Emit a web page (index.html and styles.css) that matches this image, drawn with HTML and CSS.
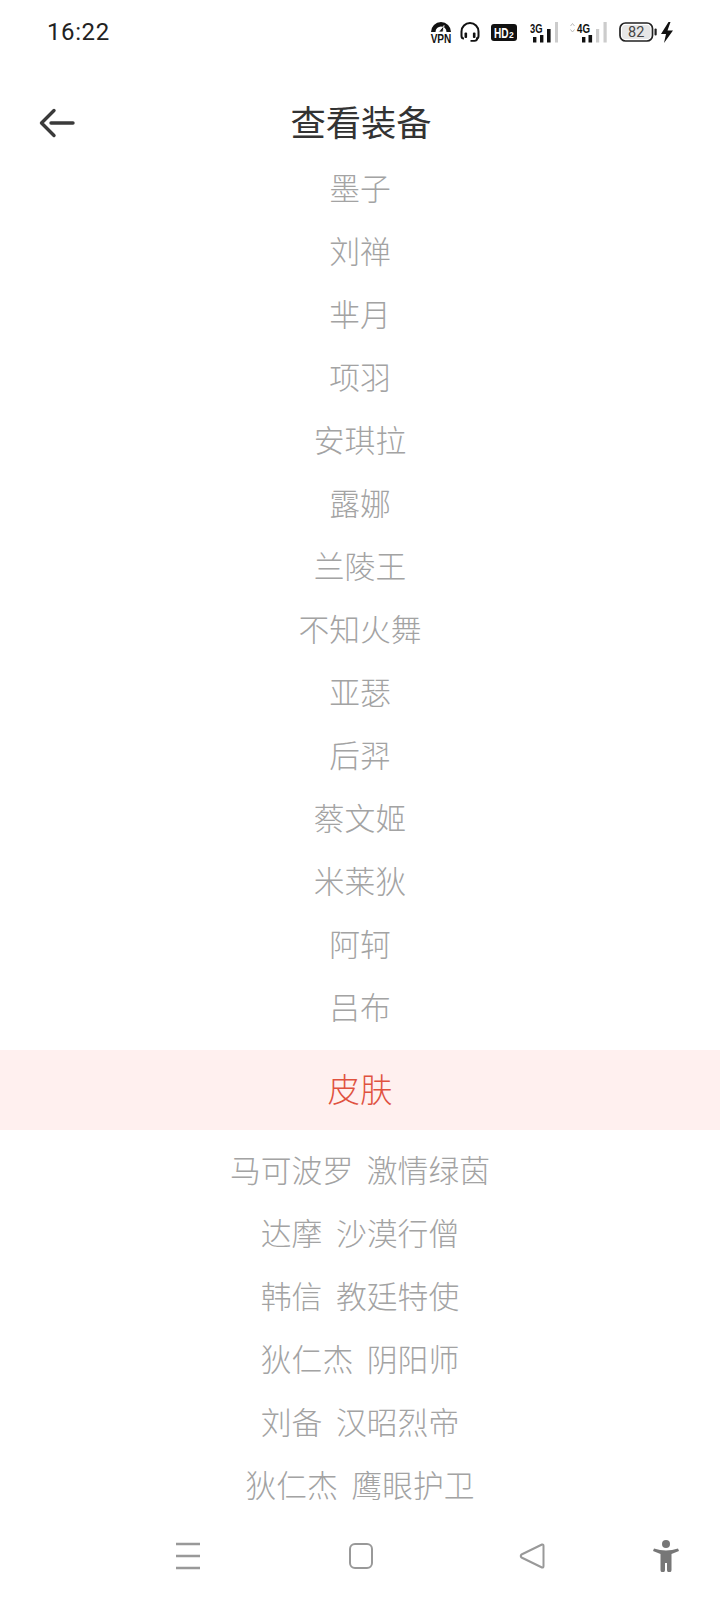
FILE: index.html
```html
<!DOCTYPE html>
<html lang="zh-CN">
<head>
  <meta charset="UTF-8">
  <title>查看装备</title>
  <meta name="viewport" content="width=device-width, initial-scale=1.0">
  <link rel="stylesheet" href="styles.css">
</head>
<body>
  <div class="page">
    <div class="status-bar">
      <span class="clock">16:22</span>
      <div class="status-icons">
        <svg class="ic-vpn" width="22" height="27" viewBox="0 -2 22 27">
          <path d="M1 11 A10 10 0 0 1 21 11 L16.5 11 A5.5 5.5 0 0 0 5.5 11 Z" fill="#111"/>
          <path d="M8.5 11 L14 4.5 L13 11 Z" fill="#111" stroke="#fff" stroke-width="0.8"/>
          <text class="ic-text" transform="translate(11 22) scale(.84 1)" text-anchor="middle" font-size="12">VPN</text>
        </svg>
        <svg class="ic-headset" width="20" height="20" viewBox="0 0 20 20">
          <path d="M4 16.5 Q1.5 16.5 1.5 14 V9.5 A8.5 8.5 0 0 1 18.5 9.5 V14 Q18.5 16.5 16 16.5" fill="none" stroke="#111" stroke-width="2"/>
          <rect x="4.5" y="10.5" width="2.6" height="5.5" rx="1" fill="#111"/>
          <rect x="12.9" y="10.5" width="2.6" height="5.5" rx="1" fill="#111"/>
          <path d="M17.5 16 Q17 18.8 14.5 18.8 H10.5" fill="none" stroke="#111" stroke-width="1.8"/>
        </svg>
        <svg class="ic-hd" width="26" height="17" viewBox="0 0 26 17">
          <rect width="26" height="17" rx="3" fill="#111"/>
          <text class="ic-text-w" transform="translate(3 13.5) scale(.72 1)" font-size="14" font-weight="700">HD</text>
          <text class="ic-text-w" x="18" y="13.5" font-size="8.5" font-weight="700">2</text>
        </svg>
        <svg class="ic-sig" width="28" height="21" viewBox="0 0 28 21">
          <text class="ic-text" x="0" y="11" font-size="13.5" textLength="12.5" lengthAdjust="spacingAndGlyphs">3G</text>
          <rect x="3" y="15" width="3.4" height="5.5" fill="#111"/>
          <rect x="10" y="13" width="3.4" height="7.5" fill="#111"/>
          <rect x="17" y="7" width="3.6" height="13.5" fill="#111"/>
          <rect x="25" y="0" width="3" height="20.5" fill="#ccc"/>
        </svg>
        <svg class="ic-sig4" width="38" height="21" viewBox="0 0 38 21">
          <path d="M1.5 4 L3.5 1.5 L5.5 4 M1.5 7.5 L3.5 10 L5.5 7.5" fill="none" stroke="#bbb" stroke-width="1"/>
          <text class="ic-text" x="8" y="11" font-size="13.5" textLength="13" lengthAdjust="spacingAndGlyphs">4G</text>
          <rect x="13" y="15" width="3.4" height="5.5" fill="#111"/>
          <rect x="19.5" y="13" width="3.6" height="7.5" fill="#111"/>
          <rect x="27" y="7" width="3.2" height="13.5" fill="#ccc"/>
          <rect x="34.5" y="0" width="3.2" height="20.5" fill="#ccc"/>
        </svg>
        <svg class="ic-bat" width="38" height="20" viewBox="0 0 38 20">
          <rect x="1" y="1" width="32.5" height="18" rx="5.5" fill="#fff" stroke="#222" stroke-width="1.7"/>
          <rect x="3" y="3" width="28.5" height="14" rx="3.5" fill="#e6e6e6"/>
          <text class="ic-text-g" x="17.2" y="15.2" text-anchor="middle" font-size="14.5">82</text>
          <rect x="35.5" y="6.5" width="2.2" height="7" rx="1" fill="#222"/>
        </svg>
        <svg class="ic-bolt" width="12" height="21" viewBox="0 0 12 21">
          <path d="M7.5 0 L0 12 H5 L3 21 L12 8.5 H6.5 L9.5 0 Z" fill="#111"/>
        </svg>
      </div>
    </div>

    <div class="top-bar">
      <svg class="back" width="36" height="30" viewBox="0 0 36 30">
        <path d="M15 2.5 L2.5 15 L15 27.5" fill="none" stroke="#3a3a3a" stroke-width="3.4" stroke-linecap="round" stroke-linejoin="round"/>
        <path d="M12 15 H34" fill="none" stroke="#3a3a3a" stroke-width="3.4" stroke-linecap="round"/>
      </svg>
      <h1 class="title">查看装备</h1>
    </div>

    <ul class="list">
      <li>墨子</li>
      <li>刘禅</li>
      <li>芈月</li>
      <li>项羽</li>
      <li>安琪拉</li>
      <li>露娜</li>
      <li>兰陵王</li>
      <li>不知火舞</li>
      <li>亚瑟</li>
      <li>后羿</li>
      <li>蔡文姬</li>
      <li>米莱狄</li>
      <li>阿轲</li>
      <li>吕布</li>
    </ul>

    <div class="section">皮肤</div>

    <ul class="list skins">
      <li>马可波罗&nbsp;&nbsp;激情绿茵</li>
      <li>达摩&nbsp;&nbsp;沙漠行僧</li>
      <li>韩信&nbsp;&nbsp;教廷特使</li>
      <li>狄仁杰&nbsp;&nbsp;阴阳师</li>
      <li>刘备&nbsp;&nbsp;汉昭烈帝</li>
      <li>狄仁杰&nbsp;&nbsp;鹰眼护卫</li>
    </ul>

    <div class="nav-bar">
      <svg width="26" height="28" viewBox="0 0 26 28">
        <path d="M1 2 H25 M1 14 H25 M1 26 H25" stroke="#999" stroke-width="2.4"/>
      </svg>
      <svg width="26" height="28" viewBox="0 0 26 28">
        <rect x="2" y="2" width="22" height="24" rx="5" fill="none" stroke="#999" stroke-width="2"/>
      </svg>
      <svg class="nav-back" width="26" height="28" viewBox="0 0 26 28">
        <path d="M23 2.5 Q24.5 2 24.5 4 V24 Q24.5 26 23 25.5 L2.5 15.5 Q1 14 2.5 12.5 Z" fill="none" stroke="#999" stroke-width="2" stroke-linejoin="round"/>
      </svg>
      <svg class="person" width="26" height="32" viewBox="0 0 26 32">
        <circle cx="13" cy="4" r="4" fill="#777"/>
        <path d="M1 8.5 Q7 10.5 13 10.5 Q19 10.5 25 8.5 L26 11 L18.5 14 V30 A2.2 2.2 0 0 1 14 30 V23 H12 V30 A2.2 2.2 0 0 1 7.5 30 V14 L0 11 Z" fill="#777"/>
      </svg>
    </div>
  </div>
</body>
</html>
```

FILE: styles.css
```css
* {
  box-sizing: border-box;
}
body {
  margin: 0;
  background: #fff;
  font-family: "Noto Sans CJK SC", "Noto Sans", sans-serif;
}
.page {
  width: 720px;
  height: 1600px;
  display: flex;
  flex-direction: column;
  overflow: hidden;
}
.status-bar {
  height: 64px;
  padding: 0 47px;
  display: flex;
  align-items: center;
  justify-content: space-between;
}
.clock {
  font-family: Roboto, sans-serif;
  font-size: 24px;
  letter-spacing: 0.6px;
  color: #222;
}
.status-icons {
  display: flex;
  align-items: center;
  flex: none;
}
.status-icons svg {
  flex: none;
}
.ic-vpn { margin-right: 8px; }
.ic-headset { margin-right: 11px; }
.ic-hd { margin-right: 13px; }
.ic-sig { margin-right: 11px; }
.ic-sig4 { margin-right: 12px; }
.ic-bat { margin-right: 4px; }
.ic-text {
  font-family: "Liberation Sans", sans-serif;
  font-weight: 700;
  fill: #111;
}
.ic-text-w {
  font-family: "Liberation Sans", sans-serif;
  fill: #fff;
}
.ic-text-g {
  font-family: Roboto, sans-serif;
  fill: #444;
}
.top-bar {
  height: 91px;
  padding-top: 21px;
  display: grid;
  grid-template-columns: 1fr auto 1fr;
  align-items: center;
}
.back {
  margin-left: 39px;
  margin-top: 6px;
}
.title {
  margin: 0 0 0 2px;
  font-size: 35.3px;
  font-weight: 400;
  color: #333;
}
.list {
  list-style: none;
  margin: 0;
  padding: 0;
}
.list li {
  height: 63px;
  display: flex;
  align-items: center;
  justify-content: center;
  font-size: 30.8px;
  font-weight: 300;
  color: #a3a3a3;
  white-space: pre;
}
.section {
  margin-top: 13px;
  height: 80px;
  padding-bottom: 6px;
  background: #fff0ef;
  color: #e0523f;
  font-size: 32.5px;
  font-weight: 300;
  display: flex;
  align-items: center;
  justify-content: center;
}
.skins {
  padding-top: 7px;
}
.nav-bar {
  margin-top: 25px;
  display: flex;
  align-items: center;
  padding-left: 175px;
}
.nav-bar svg {
  margin-right: 147px;
  flex: none;
}
.nav-bar .nav-back {
  margin-left: -2px;
}
.nav-bar .person {
  margin-left: -39px;
  margin-right: 0;
}
```
